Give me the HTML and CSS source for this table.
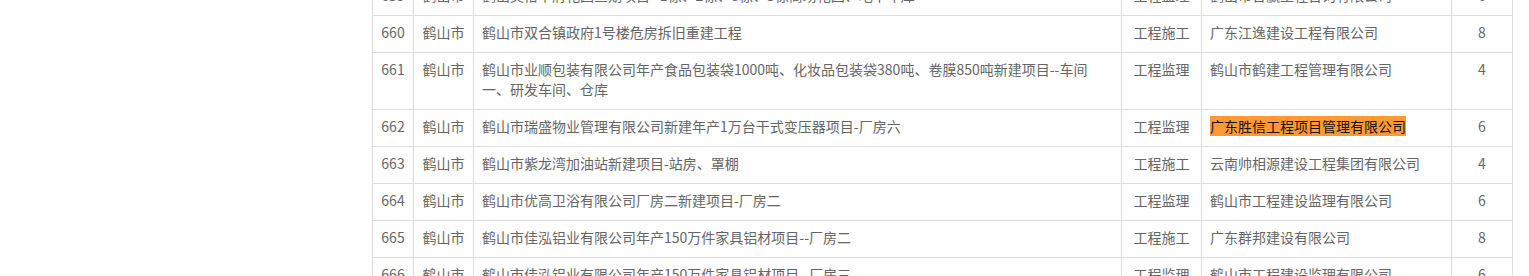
FILE: index.html
```html
<!DOCTYPE html>
<html lang="zh-CN">
<head>
<meta charset="utf-8">
<title>项目列表</title>
<link rel="stylesheet" href="styles.css">
</head>
<body>
<div class="page">
  <table class="list">
    <colgroup>
      <col class="c-no">
      <col class="c-city">
      <col class="c-name">
      <col class="c-type">
      <col class="c-org">
      <col class="c-num">
    </colgroup>
    <tbody>
      <tr>
        <td class="ctr">659</td>
        <td class="ctr">鹤山市</td>
        <td>鹤山美怡华府花园三期项目--1栋、2栋、3栋、5栋商场花园、地下车库</td>
        <td class="ctr">工程监理</td>
        <td>鹤山市合赢工程咨询有限公司</td>
        <td class="ctr">6</td>
      </tr>
      <tr>
        <td class="ctr">660</td>
        <td class="ctr">鹤山市</td>
        <td>鹤山市双合镇政府1号楼危房拆旧重建工程</td>
        <td class="ctr">工程施工</td>
        <td>广东江逸建设工程有限公司</td>
        <td class="ctr">8</td>
      </tr>
      <tr>
        <td class="ctr">661</td>
        <td class="ctr">鹤山市</td>
        <td>鹤山市业顺包装有限公司年产食品包装袋1000吨、化妆品包装袋380吨、卷膜850吨新建项目--车间一、研发车间、仓库</td>
        <td class="ctr">工程监理</td>
        <td>鹤山市鹤建工程管理有限公司</td>
        <td class="ctr">4</td>
      </tr>
      <tr>
        <td class="ctr">662</td>
        <td class="ctr">鹤山市</td>
        <td>鹤山市瑞盛物业管理有限公司新建年产1万台干式变压器项目-厂房六</td>
        <td class="ctr">工程监理</td>
        <td><span class="hl">广东胜信工程项目管理有限公司</span></td>
        <td class="ctr">6</td>
      </tr>
      <tr>
        <td class="ctr">663</td>
        <td class="ctr">鹤山市</td>
        <td>鹤山市紫龙湾加油站新建项目-站房、罩棚</td>
        <td class="ctr">工程施工</td>
        <td>云南帅相源建设工程集团有限公司</td>
        <td class="ctr">4</td>
      </tr>
      <tr>
        <td class="ctr">664</td>
        <td class="ctr">鹤山市</td>
        <td>鹤山市优高卫浴有限公司厂房二新建项目-厂房二</td>
        <td class="ctr">工程监理</td>
        <td>鹤山市工程建设监理有限公司</td>
        <td class="ctr">6</td>
      </tr>
      <tr>
        <td class="ctr">665</td>
        <td class="ctr">鹤山市</td>
        <td>鹤山市佳泓铝业有限公司年产150万件家具铝材项目--厂房二</td>
        <td class="ctr">工程施工</td>
        <td>广东群邦建设有限公司</td>
        <td class="ctr">8</td>
      </tr>
      <tr>
        <td class="ctr">666</td>
        <td class="ctr">鹤山市</td>
        <td>鹤山市佳泓铝业有限公司年产150万件家具铝材项目--厂房三</td>
        <td class="ctr">工程监理</td>
        <td>鹤山市工程建设监理有限公司</td>
        <td class="ctr">6</td>
      </tr>
    </tbody>
  </table>
</div>
</body>
</html>
```
FILE: styles.css
```css
html, body {
  margin: 0;
  padding: 0;
  background: #ffffff;
}
body {
  font-family: "Noto Sans CJK SC", "Noto Sans", sans-serif;
  font-size: 14px;
  color: #666666;
  overflow: hidden;
}
.page {
  padding-left: 372px;
  margin-top: -22px;
}
.list {
  border-collapse: collapse;
  table-layout: fixed;
  width: 1140px;
}
.c-no { width: 41px; }
.c-city { width: 60px; }
.c-name { width: 648px; }
.c-type { width: 80px; }
.c-org { width: 250px; }
.c-num { width: 61px; }
.list td {
  border: 1px solid #dddddd;
  padding: 6px 10px 10px 8px;
  line-height: 20px;
  vertical-align: top;
  text-align: left;
}
.list td.ctr {
  text-align: center;
  padding-left: 0;
  padding-right: 0;
}
.hl {
  background: #ff9933;
  color: #111111;
}
```
